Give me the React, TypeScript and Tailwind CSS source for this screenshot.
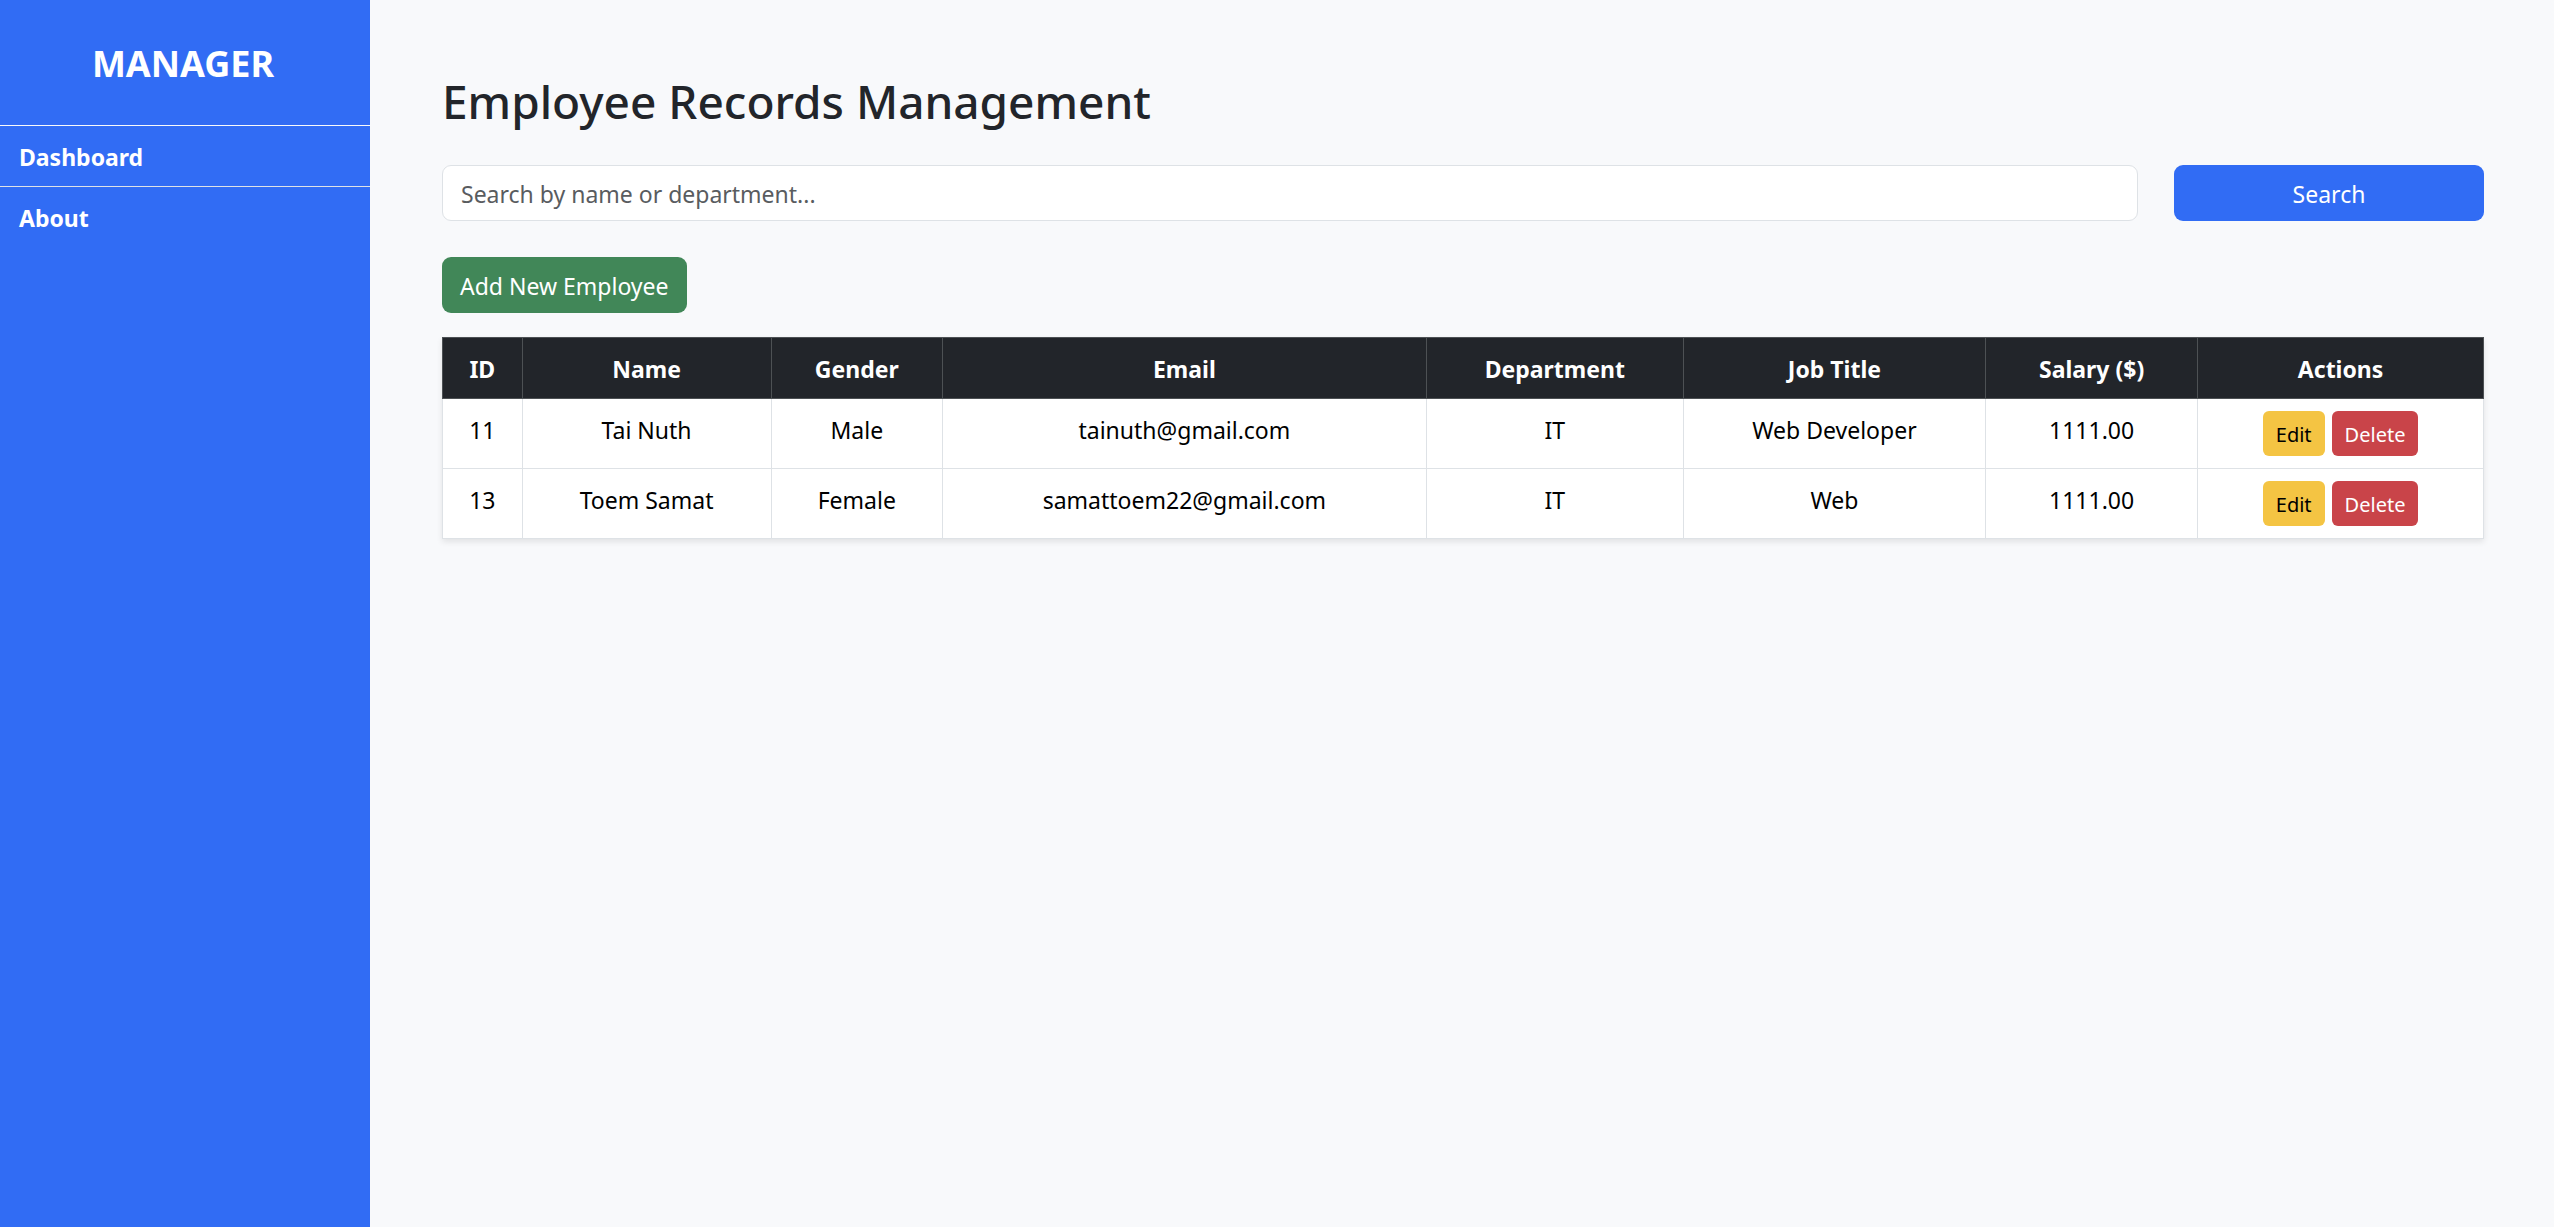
import { useState } from "react";

type Employee = {
  id: number;
  name: string;
  gender: string;
  email: string;
  department: string;
  jobTitle: string;
  salary: string;
};

const employees: Employee[] = [
  { id: 11, name: "Tai Nuth", gender: "Male", email: "tainuth@gmail.com", department: "IT", jobTitle: "Web Developer", salary: "1111.00" },
  { id: 13, name: "Toem Samat", gender: "Female", email: "samattoem22@gmail.com", department: "IT", jobTitle: "Web", salary: "1111.00" },
];

const columns = [
  { label: "ID", width: "w-[3.9%]" },
  { label: "Name", width: "w-[12.2%]" },
  { label: "Gender", width: "w-[8.4%]" },
  { label: "Email", width: "w-[23.7%]" },
  { label: "Department", width: "w-[12.6%]" },
  { label: "Job Title", width: "w-[14.8%]" },
  { label: "Salary ($)", width: "w-[10.4%]" },
  { label: "Actions", width: "w-[14%]" },
];

function Sidebar() {
  return (
    <aside className="w-[370px] shrink-0 bg-[#316cf4] text-white">
      <div className="flex h-[125px] items-center justify-center pt-0.5 pr-1">
        <span className="text-[36px] leading-[54px] font-bold">MANAGER</span>
      </div>
      <nav className="flex flex-col">
        <a href="#dashboard" className="border-t border-[#f8f9fb] pt-[13px] pb-[11px] pl-[19px] text-[23px] leading-9 font-bold">
          Dashboard
        </a>
        <a href="#about" className="border-t border-[#dee2e6] pt-[13px] pb-[11px] pl-[19px] text-[23px] leading-9 font-bold">
          About
        </a>
      </nav>
    </aside>
  );
}

function SearchBar() {
  const [query, setQuery] = useState("");
  return (
    <form className="mt-[34px] flex gap-9" onSubmit={(e) => e.preventDefault()}>
      <input
        type="text"
        aria-label="Search by name or department"
        placeholder="Search by name or department..."
        value={query}
        onChange={(e) => setQuery(e.target.value)}
        className="h-14 min-w-0 grow rounded-[9px] border border-[#dee2e6] bg-white px-[18px] pt-0.5 text-[23px] leading-9 placeholder:text-[#595c5f]"
      />
      <button type="submit" className="h-14 w-[310px] shrink-0 rounded-[9px] bg-[#316cf4] pt-0.5 text-[23px] leading-9 text-white">
        Search
      </button>
    </form>
  );
}

function EmployeeTable() {
  return (
    <table className="mt-6 w-full table-fixed border-collapse bg-white text-center text-[23px] leading-9 text-black shadow-[0_3px_6px_rgba(0,0,0,0.09)]">
      <thead className="bg-[#22252a] text-white">
        <tr>
          {columns.map((c) => (
            <th key={c.label} scope="col" className={`${c.width} border border-[#4d5154] pt-[13px] pb-[11px] font-bold`}>
              {c.label}
            </th>
          ))}
        </tr>
      </thead>
      <tbody>
        {employees.map((e) => (
          <tr key={e.id}>
            {[e.id, e.name, e.gender, e.email, e.department, e.jobTitle, e.salary].map((value, i) => (
              <td key={columns[i].label} className="border border-[#dee2e6] pt-[13px] pb-[11px] align-top">
                {value}
              </td>
            ))}
            <td className="border border-[#dee2e6] py-3 align-top">
              <div className="flex justify-center gap-[7px]">
                <button type="button" className="h-[45px] rounded-md bg-[#f4c443] px-[13px] pt-0.5 text-[20px] text-black">
                  Edit
                </button>
                <button type="button" className="h-[45px] rounded-md bg-[#c94449] px-[13px] pt-0.5 text-[20px] text-white">
                  Delete
                </button>
              </div>
            </td>
          </tr>
        ))}
      </tbody>
    </table>
  );
}

export default function App() {
  return (
    <div className="flex min-h-screen bg-[#f8f9fb] font-['Noto_Sans',sans-serif] text-[#22252a]">
      <Sidebar />
      <main className="min-w-0 grow pt-[71px] pr-[70px] pl-[72px]">
        <h1 className="text-[46px] leading-[60px] font-medium">Employee Records Management</h1>
        <SearchBar />
        <button type="button" className="mt-9 h-14 rounded-[9px] bg-[#418758] px-[18px] pt-0.5 text-[23px] leading-9 text-white">
          Add New Employee
        </button>
        <EmployeeTable />
      </main>
    </div>
  );
}
